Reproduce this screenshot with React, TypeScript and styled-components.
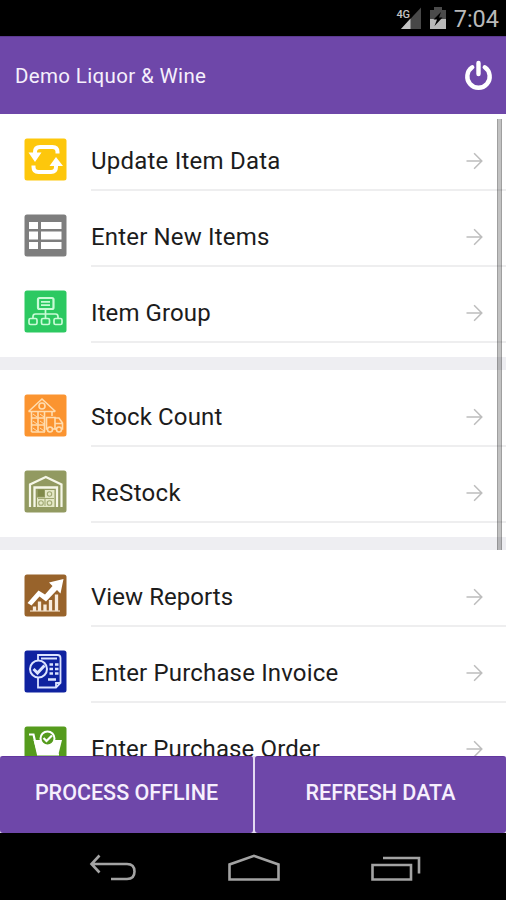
import React from "react";
import styled, { createGlobalStyle } from "styled-components";

const Global = createGlobalStyle`
  *, *::before, *::after { box-sizing: border-box; }
  body { margin: 0; background: #000; }
`;

const Screen = styled.div`
  width: 506px;
  height: 900px;
  display: flex;
  flex-direction: column;
  overflow: hidden;
  background: #fff;
  font-family: Roboto, "Noto Sans", sans-serif;
`;

const StatusBar = styled.div`
  flex: none;
  height: 36px;
  background: #000;
  display: flex;
  align-items: center;
  justify-content: flex-end;
  padding-right: 8px;
`;

const StatusIcons = styled.div`
  display: flex;
  gap: 7px;
`;

const Clock = styled.span`
  color: #b9b9b9;
  font-size: 23.5px;
  line-height: 36px;
  margin-left: 8px;
  margin-right: -1px;
  padding-top: 1px;
`;

const Header = styled.header`
  flex: none;
  height: 78px;
  background: #6e47a9;
  border-top: 1px solid #5b3a90;
  display: flex;
  align-items: center;
  justify-content: space-between;
  padding: 0 13px 0 15px;
`;

const Title = styled.h1`
  margin: 0;
  color: #f6f0fc;
  font-size: 20.5px;
  font-weight: 400;
  letter-spacing: 0.35px;
`;

const IconButton = styled.button`
  border: 0;
  padding: 0 0 2px;
  background: none;
  display: flex;
`;

const Content = styled.main`
  flex: 1;
  min-height: 0;
  overflow: hidden;
  position: relative;
`;

const ScrollThumb = styled.div`
  position: absolute;
  top: 5px;
  right: 4px;
  width: 5px;
  height: 431px;
  border: solid rgba(0, 0, 0, 0.18);
  border-width: 0 1px;
  background: rgba(0, 0, 0, 0.24);
`;

const Section = styled.section`
  padding-bottom: 15px;
  border-bottom: 13px solid #eeeef2;
`;

const Row = styled.div`
  height: 76px;
  display: flex;
  padding-left: 24px;
`;

const Tile = styled.svg`
  flex: none;
  width: 43px;
  height: 43px;
  margin-top: 24px;
  margin-right: 24px;
`;

const RowBody = styled.div`
  flex: 1;
  height: 77px;
  display: flex;
  align-items: center;
  justify-content: space-between;
  padding: 19px 22px 0 0;
  border-bottom: 2px solid #eeeeef;
`;

const Label = styled.span<{ $spacing: number }>`
  color: #1c1c1c;
  font-size: 24px;
  line-height: 28px;
  letter-spacing: ${(p) => p.$spacing}px;
`;

const Footer = styled.footer`
  flex: none;
  height: 77px;
  display: grid;
  grid-template-columns: 253px 1fr;
  gap: 2px;
  background: #e4daf2;
`;

const Action = styled.button`
  border: 0;
  border-top: 1px solid #62379f;
  border-radius: 3px;
  padding: 0 0 6px;
  background: #6e47a9;
  color: #f6effd;
  font: 500 21.5px Roboto, sans-serif;
`;

const NavBar = styled.nav`
  flex: none;
  height: 67px;
  background: #000;
  display: flex;
  align-items: center;
  justify-content: space-between;
  padding: 3px 85px 0 89px;
`;

const Arrow = () => (
  <svg width="18" height="18" viewBox="0 0 18 18" fill="none" stroke="#bdbdbd" strokeWidth="1.5">
    <path d="M0.5 9H16.2M8.1 1.2L15.8 9L8.1 16.8" />
  </svg>
);

const tile = (bg: string, art: React.ReactNode) => (
  <Tile viewBox="0 0 43 43">
    <rect x="0.5" y="0.5" width="42" height="42" rx="2.500" fill={bg} />
    {art}
  </Tile>
);

const updateIcon = tile(
  "#fdc70c",
  <g fill="none" stroke="#fff" strokeWidth="4">
    <path d="M33.500 15.500V14Q33.500 9 28.500 9H16Q11 9 11 14V16" />
    <path d="M9.500 27.500V29Q9.500 34 14.500 34H27Q32 34 32 29V27" />
    <path d="M4.500 14.500H17.500L11 24Z M25.500 28H39L32 19Z" fill="#fff" stroke="none" />
  </g>
);

const tableIcon = tile(
  "#7e7e7e",
  <path
    fill="#fff"
    d="M5 8h9v7H5z M17 8H37.500v7H17z M5 17.500h9v8H5z M17 17.500H37.500v8H17z M5 28h9v7H5z M17 28H37.500v7H17z"
  />
);

const groupIcon = tile(
  "#2cc961",
  <g fill="none" stroke="#c9fbd6" strokeWidth="1.700">
    <rect x="14" y="8" width="15.500" height="11" rx="1.500" strokeWidth="2.200" />
    <path d="M17 11.800h9M17 15.200h9M21.500 19v9M9 28v-1.500q0-2.500 2.500-2.500h20q2.500 0 2.500 2.500V28" />
    <rect x="5" y="28.500" width="8" height="6" rx="1.500" />
    <rect x="17.500" y="28.500" width="8" height="6" rx="1.500" />
    <rect x="30" y="28.500" width="8" height="6" rx="1.500" />
  </g>
);

const stockIcon = tile(
  "#fb9430",
  <g fill="none" stroke="#ffdcae" strokeWidth="1.600">
    <path d="M4.500 17.500L18 5L31.500 17.500M4.500 17.500H31M7.500 17.500V38M7.500 38H21M14 17.500V38M20.500 17.500V38M28 17V22M7.500 24H21M7.500 31H21" />
    <circle cx="18" cy="12" r="3" />
    <path d="M9 20l4 3M16 20l4 3M9 27l4 3M16 27l4 3M9 34l4 3M16 34l4 3" strokeWidth="1" />
    <path d="M22.500 23.500H31V35H22.500Z" fill="#fb9430" />
    <path d="M31 24H35L38.500 29V35H31M31 29.500H38" />
    <circle cx="26" cy="35.500" r="2.500" fill="#fb9430" />
    <circle cx="35" cy="35.500" r="2.500" fill="#fb9430" />
  </g>
);

const restockIcon = tile(
  "#929a61",
  <g fill="none" stroke="#f6f7e8">
    <path d="M6 37V14.500L21.800 7L37.500 14.500V37" strokeWidth="2.200" />
    <path d="M10.500 37V17.500H33V37" strokeWidth="2.300" />
    <path d="M13 37V27.500H21V20H30.500V37Z" fill="#e4e8c6" stroke="none" />
    <path d="M14 19.500h6v7h-6z" fill="#808a4a" stroke="none" />
    <g stroke="#a0a873" strokeWidth="1.100">
      <circle cx="17" cy="33" r="2.300" />
      <circle cx="25.500" cy="33" r="2.300" />
      <circle cx="25.500" cy="24" r="2.200" />
      <path d="M14 28.500H30M21 28.500V36" />
    </g>
  </g>
);

const reportsIcon = tile(
  "#98632b",
  <g>
    <path d="M3.500 29L14.500 16.500L21 20.500L28.500 12L25 8.500L39.500 5L36.500 19.500L33 16L22 27.500L15.500 22.500L7.500 31.500Z" fill="#fff" />
    <path d="M10.500 37V32.500M15.500 37V27.500M21 37V30.500M26.500 37V26M32.500 37V20.500" stroke="#f8ebdc" strokeWidth="3.300" />
    <path d="M6 37H36" stroke="#f2dfca" strokeWidth="1.200" />
  </g>
);

const invoiceIcon = tile(
  "#0f22a0",
  <g fill="none" stroke="#dce4ff" strokeWidth="1.800">
    <path d="M14 11V5H33.500Q36.500 5 36.500 8V33L32 37.500H14V27M36.500 33H32V37.500M17 8.500H33" />
    <path d="M25.500 14.500h3.500M31 14.500h3.500M25.500 19h3.500M31 19h3.500M25.500 23.500h3.500M31 23.500h3.500M24 29.500h8" strokeWidth="2.300" />
    <circle cx="14.500" cy="19" r="8.500" fill="#0f22a0" strokeWidth="2" />
    <path d="M9.500 19L13.500 23L20.500 15.500" strokeWidth="3" />
  </g>
);

const orderIcon = tile(
  "#559b1d",
  <g fill="none" stroke="#fff">
    <path d="M5 8.500H9.500L14 28.500H35" strokeWidth="2.200" />
    <path d="M9.500 14H38L34.500 28H13.500Z" fill="#fff" stroke="none" />
    <circle cx="23.500" cy="12.500" r="7" fill="#559b1d" strokeWidth="2" />
    <path d="M19.500 12L22.500 15L28 9.500" strokeWidth="2.200" />
  </g>
);

const sections = [
  [
    { label: "Update Item Data", spacing: 0.22, icon: updateIcon },
    { label: "Enter New Items", spacing: 0.17, icon: tableIcon },
    { label: "Item Group", spacing: 0.1, icon: groupIcon },
  ],
  [
    { label: "Stock Count", spacing: 0.14, icon: stockIcon },
    { label: "ReStock", spacing: 0.3, icon: restockIcon },
  ],
  [
    { label: "View Reports", spacing: 0.06, icon: reportsIcon },
    { label: "Enter Purchase Invoice", spacing: 0.16, icon: invoiceIcon },
    { label: "Enter Purchase Order", spacing: 0.12, icon: orderIcon },
  ],
];

const SignalIcon = () => (
  <svg width="27" height="24" viewBox="0 0 27 24">
    <path d="M5 23L25 1.500V23Z" fill="#484848" />
    <path d="M5 23L14.500 12.500V23Z" fill="#c4c4c4" />
    <text
      x="0.500"
      y="11.500"
      fill="#c4c4c4"
      stroke="#000"
      strokeWidth="2"
      paintOrder="stroke"
      fontFamily="Roboto"
      fontSize="11"
      fontWeight="500"
      letterSpacing="-0.300"
    >
      4G
    </text>
  </svg>
);

const BatteryIcon = () => (
  <svg width="16" height="24" viewBox="0 0 16 24">
    <path d="M0 4H4V1H12V4H16V13H0Z" fill="#4b4b4b" />
    <path d="M0 13H16V23H0Z" fill="#b9b9b9" />
    <path d="M11 6L3.500 13.500H7L4.500 20L12.500 11.500H9Z" fill="#000" />
  </svg>
);

export default function App() {
  return (
    <>
      <Global />
      <Screen>
        <StatusBar>
          <StatusIcons>
            <SignalIcon />
            <BatteryIcon />
          </StatusIcons>
          <Clock>7:04</Clock>
        </StatusBar>
        <Header>
          <Title>Demo Liquor &amp; Wine</Title>
          <IconButton aria-label="Log out">
            <svg width="29" height="30" viewBox="0 0 29 30" fill="none" stroke="#fff" strokeWidth="4.400" strokeLinecap="round">
              <path d="M14.500 3V14M8.200 7.300A11.200 11.200 0 1 0 20.800 7.300" />
            </svg>
          </IconButton>
        </Header>
        <Content>
          {sections.map((rows, i) => (
            <Section key={i}>
              {rows.map((r) => (
                <Row key={r.label}>
                  {r.icon}
                  <RowBody>
                    <Label $spacing={r.spacing}>{r.label}</Label>
                    <Arrow />
                  </RowBody>
                </Row>
              ))}
            </Section>
          ))}
          <ScrollThumb />
        </Content>
        <Footer>
          <Action>PROCESS OFFLINE</Action>
          <Action>REFRESH DATA</Action>
        </Footer>
        <NavBar>
          <svg width="48" height="28" viewBox="0 0 48 28" fill="none" stroke="#a3a3a3" strokeWidth="2.600">
            <path d="M10.500 1.500L2.500 10L10.500 18.500M3 10H38Q45.500 10 45.500 17.500T38 25H22" />
          </svg>
          <svg width="52" height="28" viewBox="0 0 52 28" fill="none" stroke="#a3a3a3" strokeWidth="2.600">
            <path d="M1.500 25.500V10.500L26 1.800L50.500 10.500V25.500Z" />
          </svg>
          <svg width="50" height="28" viewBox="0 0 50 28" fill="none" stroke="#a3a3a3" strokeWidth="2.600">
            <path d="M1.500 11H40V25.500H1.500ZM12 4H48V19.500" />
          </svg>
        </NavBar>
      </Screen>
    </>
  );
}
